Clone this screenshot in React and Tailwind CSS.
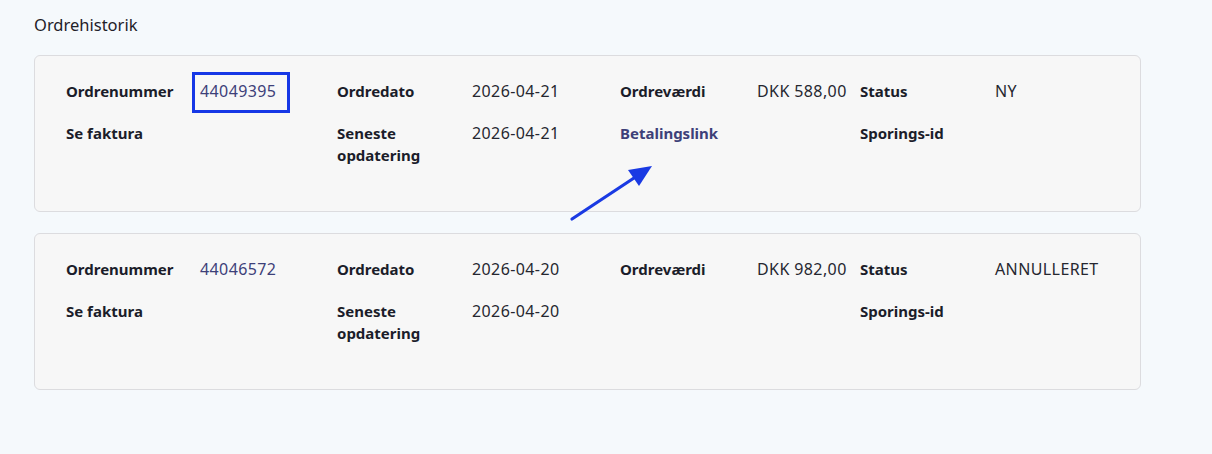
import React from 'react';

const orders = [
  {
    number: '44049395',
    date: '2026-04-21',
    updated: '2026-04-21',
    value: 'DKK 588,00',
    status: 'NY',
    payLink: true,
    highlight: true,
  },
  {
    number: '44046572',
    date: '2026-04-20',
    updated: '2026-04-20',
    value: 'DKK 982,00',
    status: 'ANNULLERET',
    payLink: false,
    highlight: false,
  },
];

function Label({ children }) {
  return <div className="text-[15px] font-bold text-[#1b1d2a]">{children}</div>;
}

function Value({ children }) {
  return <div className="text-[16px] tracking-[0.4px] text-[#262730]">{children}</div>;
}

function Arrow() {
  return (
    <svg
      className="absolute left-[526px] top-[100px] pointer-events-none"
      width="100"
      height="70"
      viewBox="0 0 100 70"
    >
      <line x1="11" y1="63" x2="76" y2="20" stroke="#1a3ae3" strokeWidth="3.2" strokeLinecap="round" />
      <polygon points="91,10 78,30 67,14" fill="#1a3ae3" />
    </svg>
  );
}

function OrderCard({ order }) {
  return (
    <div className="relative rounded-md border border-[#dcdcdf] bg-[#f7f7f7] pl-[31px] pr-6 pt-6 pb-[45px]">
      <div className="grid grid-cols-[134px_137px_135px_148px_137px_103px_135px_1fr] gap-y-5 leading-[22px]">
        <Label>Ordrenummer</Label>
        <div className="relative">
          <a className="text-[16px] tracking-[0.4px] text-[#3d4079]">{order.number}</a>
          {order.highlight && (
            <div className="absolute -left-2 -top-2 h-[41px] w-[98px] border-[3px] border-[#1637e6]" />
          )}
        </div>
        <Label>Ordredato</Label>
        <Value>{order.date}</Value>
        <Label>Ordreværdi</Label>
        <Value>{order.value}</Value>
        <Label>Status</Label>
        <Value>{order.status}</Value>

        <Label>Se faktura</Label>
        <div />
        <Label>
          Seneste
          <br />
          opdatering
        </Label>
        <Value>{order.updated}</Value>
        {order.payLink ? (
          <a className="text-[15px] font-bold text-[#3d4079]">Betalingslink</a>
        ) : (
          <div />
        )}
        <div />
        <Label>Sporings-id</Label>
        <div />
      </div>
      {order.highlight && <Arrow />}
    </div>
  );
}

export default function App() {
  return (
    <div className="min-h-screen bg-[#f5f9fc] pl-[34px] pr-[71px] pt-[14px] font-['Noto_Sans',sans-serif]">
      <h2 className="text-[16.5px] leading-[22px] text-[#1f2128]">Ordrehistorik</h2>
      <div className="mt-[19px] flex flex-col gap-[21px]">
        {orders.map((order) => (
          <OrderCard key={order.number} order={order} />
        ))}
      </div>
    </div>
  );
}
